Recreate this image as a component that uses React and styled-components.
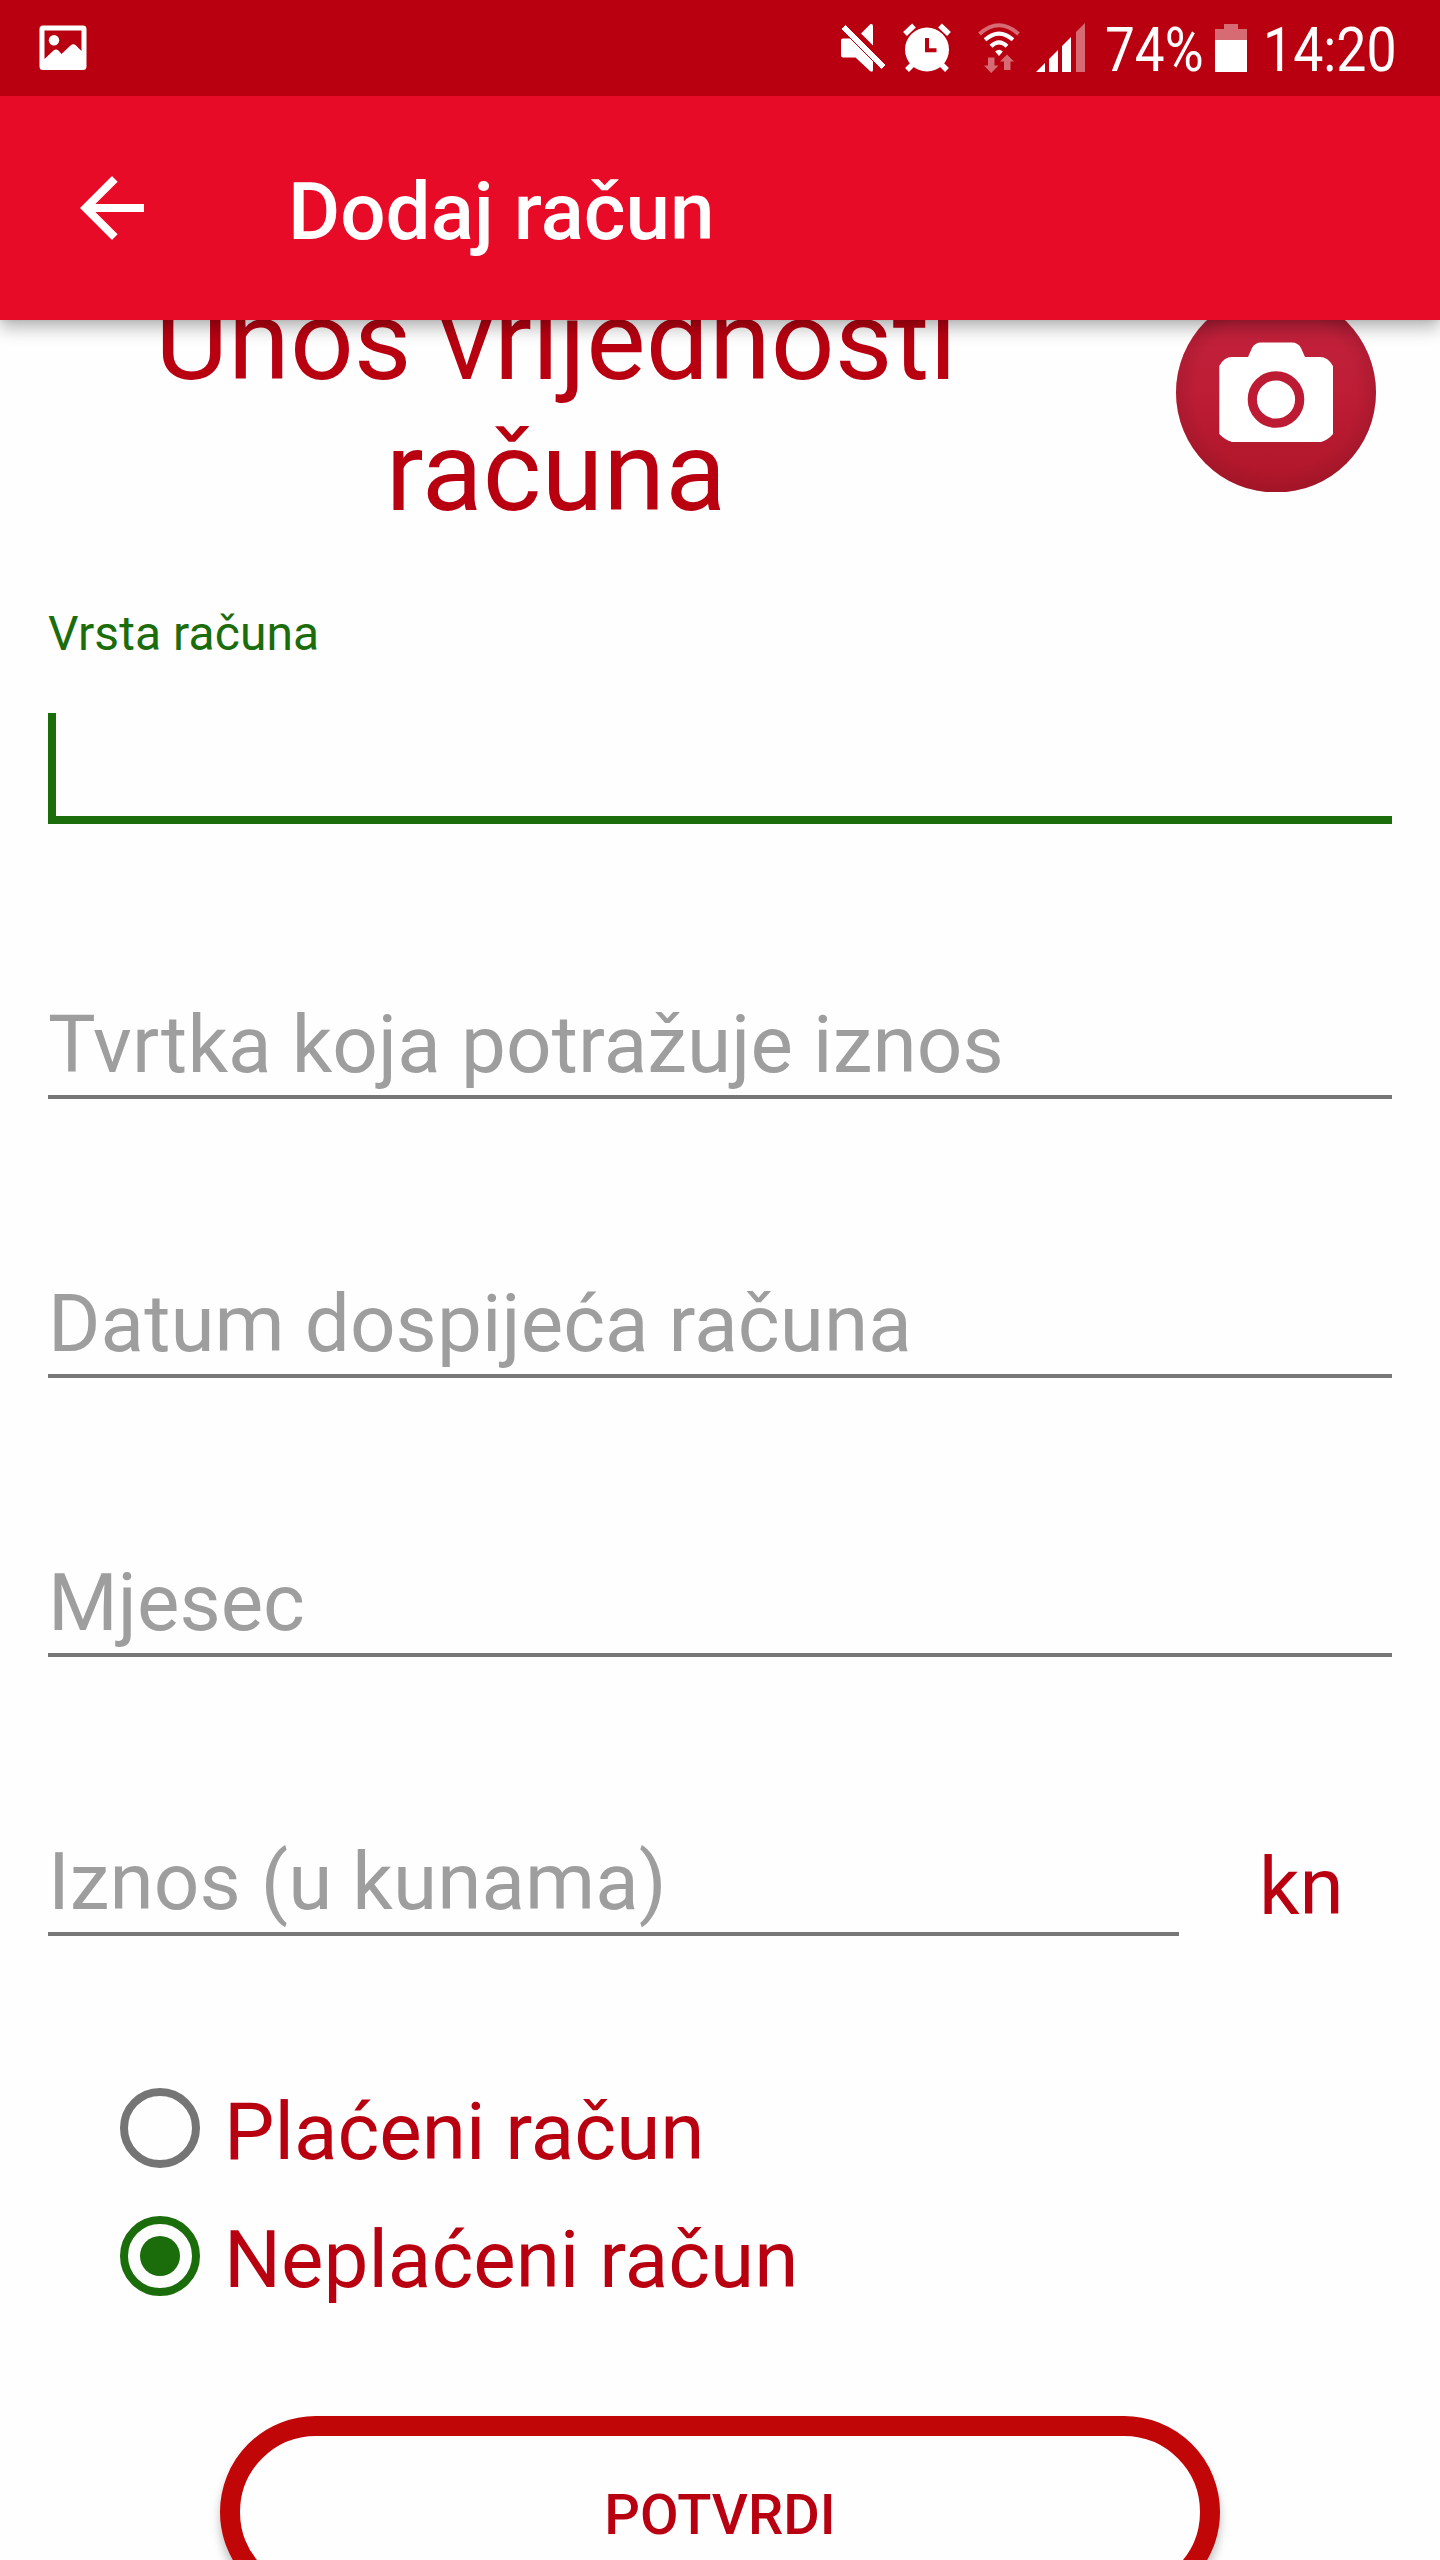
import React from 'react';
import styled, { createGlobalStyle } from 'styled-components';

const Global = createGlobalStyle`
  *, *::before, *::after { box-sizing: border-box; }
  html, body { margin: 0; padding: 0; background: #fefefe; }
  body { font-family: Roboto, "Noto Sans", sans-serif; }
`;

const Screen = styled.main`
  display: flex;
  flex-direction: column;
  width: 1440px;
  height: 2560px;
  overflow: hidden;
  background: #fefefe;
`;

const Header = styled.header`
  flex: none;
  z-index: 1;
  box-shadow: 0 8px 16px rgba(0, 0, 0, 0.28), 0 0 6px rgba(0, 0, 0, 0.1);
`;

const StatusBar = styled.div`
  display: flex;
  align-items: center;
  justify-content: space-between;
  height: 96px;
  padding: 0 45px 0 39px;
  background: #b80011;
  color: #fff;
`;

const StatusIcons = styled.div`
  display: flex;
  align-items: center;
`;

const Glyph = styled.svg`
  display: block;
  flex: none;
  width: ${(p) => p.$w}px;
  height: ${(p) => p.$h}px;
  margin-left: ${(p) => p.$gap || 0}px;
`;

const StatusText = styled.span`
  width: ${(p) => p.$w}px;
  margin-left: ${(p) => p.$gap}px;
  font-size: 61px;
  line-height: 70px;
  white-space: nowrap;
  padding-top: 4px;
  transform: scaleX(${(p) => p.$squeeze});
  transform-origin: left center;
`;

const Toolbar = styled.div`
  display: flex;
  align-items: center;
  height: 224px;
  padding-left: 64px;
  background: #e70b28;
  color: #fff;
`;

const Title = styled.h1`
  margin: 8px 0 0 128px;
  font-size: 80px;
  line-height: 94px;
  font-weight: 500;
`;

const Content = styled.section`
  flex: none;
  display: flex;
  flex-direction: column;
  padding: 0 48px;
  margin-top: -40px;
`;

const Intro = styled.div`
  display: flex;
  align-items: flex-start;
  height: 326px;
`;

const Heading = styled.h2`
  width: 1016px;
  margin: -5px 0 0;
  font-size: 112px;
  line-height: 131px;
  font-weight: 400;
  letter-spacing: 0.08px;
  text-align: center;
  color: #b80011;
`;

const Camera = styled.svg`
  width: 200px;
  height: 200px;
  margin: 12px 0 0 112px;
`;

const Label = styled.label`
  height: 56px;
  font-size: 48px;
  line-height: 56px;
  letter-spacing: 0.08px;
  color: #1b6c0a;
`;

const ActiveInput = styled.div`
  height: 111px;
  margin-top: 51px;
  border-bottom: 8px solid #1b6c0a;
`;

const Caret = styled.div`
  width: 8px;
  height: 103px;
  background: #1b6c0a;
`;

const Field = styled.div`
  display: flex;
  align-items: flex-end;
  width: ${(p) => p.$w || 1344}px;
  height: ${(p) => p.$h || 279}px;
  padding-bottom: 3px;
  border-bottom: 4px solid #777;
  font-size: 80px;
  line-height: 94px;
  letter-spacing: ${(p) => p.$spacing || 0}px;
  color: #9e9e9e;
`;

const AmountRow = styled.div`
  display: flex;
  align-items: flex-end;
`;

const Currency = styled.span`
  margin: 0 0 2px 80px;
  font-size: 80px;
  line-height: 94px;
  color: #b80011;
`;

const Options = styled.div`
  display: flex;
  flex-direction: column;
  margin: 128px 0 0 72px;
`;

const Option = styled.div`
  display: flex;
  align-items: center;
  height: 128px;
  font-size: 80px;
  line-height: 94px;
  color: #b80011;
`;

const Radio = styled.span`
  display: flex;
  align-items: center;
  justify-content: center;
  width: 80px;
  height: 80px;
  margin-right: 24px;
  border: 8px solid ${(p) => (p.$on ? '#1b6c0a' : '#757575')};
  border-radius: 50%;

  &::after {
    content: '';
    width: 40px;
    height: 40px;
    border-radius: 50%;
    background: ${(p) => (p.$on ? '#1b6c0a' : 'transparent')};
  }
`;

const OptionText = styled.span`
  margin-top: 8px;
`;

const Submit = styled.button`
  width: 1000px;
  height: 192px;
  margin: 96px 0 0 172px;
  padding: 6px 0 0;
  border: 20px solid #c00606;
  border-radius: 96px;
  background: #fefefe;
  box-shadow: 0 8px 10px rgba(0, 0, 0, 0.25);
  font-family: inherit;
  font-size: 56px;
  font-weight: 500;
  color: #b80011;
`;

function ImageIcon() {
  return (
    <Glyph $w={48} $h={46} viewBox="0 0 48 46">
      <path fill="#fff" fillRule="evenodd" d="M4 0.5H44Q47.5 .5 47.5 4V41.500Q47.500 45 44 45H4Q.5 45 .5 41.500V4Q.5 .5 4 .5ZM5.500 5.500V34L14.500 25.500Q17 23.500 19.500 25.500L22.500 29L31.500 20.500Q34.500 18 37 20.500L42.500 26V5.500Z" />
      <circle cx="15" cy="15.200" r="5.200" fill="#fff" />
    </Glyph>
  );
}

function MuteIcon() {
  return (
    <Glyph $w={46} $h={50} viewBox="0 0 46 50">
      <g fill="#fff">
        <path d="M30.500 1Q33 .5 33 3V22.500L21 10.500Z" />
        <path d="M3 15.500H11L33 37.500V46.500Q33 50 30 48L15.500 34.500H3Q1 34.500 1 32.500V17.500Q1 15.500 3 15.500Z" />
      </g>
      <path fill="#fff" stroke="#b80011" strokeWidth="1" d="M1 6L5.500 1.500L46 42L41.500 46.500Z" />
    </Glyph>
  );
}

function AlarmIcon() {
  return (
    <Glyph $w={48} $h={50} $gap={17} viewBox="0 0 48 50">
      <circle cx="24" cy="26.500" r="22" fill="#fff" />
      <g stroke="#fff" strokeWidth="5.500">
        <path d="M2 11L11 2.500M37 2.500L46 11M10 41L4 47M38 41L44 47" />
      </g>
      <path fill="none" stroke="#b80011" strokeWidth="4" d="M24 15V27.300H33.500" />
    </Glyph>
  );
}

function WifiIcon() {
  return (
    <Glyph $w={44} $h={50} $gap={26} viewBox="0 0 44 50">
      <g fill="none" stroke="#fff" strokeWidth="4">
        <path opacity=".42" d="M2.500 11Q22 -6.500 41.500 11" />
        <path d="M8 16.800Q22 4.500 36 16.800" />
        <path d="M14 23.200Q22 15.500 30 23.200" />
      </g>
      <path fill="#fff" d="M18.200 28.400Q22 25 25.800 28.400L22 33Z" />
      <path fill="#fff" opacity=".42" d="M11 34.500H17.500V42.500H21.500L14.200 50L7 42.500H11ZM27 47H33.500V38.500H37L30 31.500L23 38.500H27Z" />
    </Glyph>
  );
}

function SignalIcon() {
  return (
    <Glyph $w={50} $h={50} $gap={15} viewBox="0 0 50 50">
      <g fill="#fff">
        <path d="M0 49L9 40V49ZM13 36L22 27V49H13ZM26 23L35 14V49H26Z" />
        <path opacity=".42" d="M40 9L49 0V49H40Z" />
      </g>
    </Glyph>
  );
}

function BatteryIcon() {
  return (
    <Glyph $w={32} $h={48} viewBox="0 0 32 48" $gap={13}>
      <path fill="#fff" opacity=".42" d="M9 0H23V5H32V16H0V5H9Z" />
      <path fill="#fff" d="M0 16H32V48H0Z" />
    </Glyph>
  );
}

function BackArrow() {
  return (
    <Glyph $w={96} $h={96} viewBox="0 0 24 24">
      <path fill="#fff" d="M20 11H7.830l5.590-5.590L12 4l-8 8 8 8 1.410-1.410L7.830 13H20v-2z" />
    </Glyph>
  );
}

function CameraButton() {
  return (
    <Camera viewBox="0 0 200 200">
      <defs>
        <linearGradient id="fill" x1="0" y1="0" x2="0" y2="1">
          <stop offset="0" stopColor="#c6233f" />
          <stop offset=".5" stopColor="#bd1d35" />
          <stop offset="1" stopColor="#ae1528" />
        </linearGradient>
        <radialGradient id="edge">
          <stop offset=".8" stopColor="#801525" stopOpacity="0" />
          <stop offset="1" stopColor="#801525" stopOpacity=".28" />
        </radialGradient>
      </defs>
      <circle cx="100" cy="100.500" r="100" fill="url(#fill)" />
      <circle cx="100" cy="100.500" r="100" fill="url(#edge)" />
      <path fill="#fff" d="M56 65H72L76 56Q79 50.500 85 50.500H116Q122 50.500 125 56L129 65H144Q152 65 157 74V142Q152 148 145 150H56Q49 148 43.300 142V74Q48 65 56 65Z" />
      <circle cx="100" cy="107.500" r="23.700" fill="#fff" stroke="#bd1b33" strokeWidth="9.200" />
    </Camera>
  );
}

export default function App() {
  return (
    <>
      <Global />
      <Screen>
        <Header>
          <StatusBar>
            <ImageIcon />
            <StatusIcons>
              <MuteIcon />
              <AlarmIcon />
              <WifiIcon />
              <SignalIcon />
              <StatusText $w={97} $gap={19} $squeeze={0.87}>74%</StatusText>
              <BatteryIcon />
              <StatusText $w={132} $gap={16} $squeeze={0.88}>14:20</StatusText>
            </StatusIcons>
          </StatusBar>
          <Toolbar>
            <BackArrow />
            <Title>Dodaj račun</Title>
          </Toolbar>
        </Header>
        <Content>
          <Intro>
            <Heading>Unos vrijednosti računa</Heading>
            <CameraButton />
          </Intro>
          <Label>Vrsta računa</Label>
          <ActiveInput>
            <Caret />
          </ActiveInput>
          <Field $h={275} $spacing={0.12}>Tvrtka koja potražuje iznos</Field>
          <Field $spacing={0.07}>Datum dospijeća računa</Field>
          <Field>Mjesec</Field>
          <AmountRow>
            <Field $w={1131} $spacing={0.07}>Iznos (u kunama)</Field>
            <Currency>kn</Currency>
          </AmountRow>
          <Options>
            <Option>
              <Radio />
              <OptionText>Plaćeni račun</OptionText>
            </Option>
            <Option>
              <Radio $on />
              <OptionText>Neplaćeni račun</OptionText>
            </Option>
          </Options>
          <Submit>POTVRDI</Submit>
        </Content>
      </Screen>
    </>
  );
}
